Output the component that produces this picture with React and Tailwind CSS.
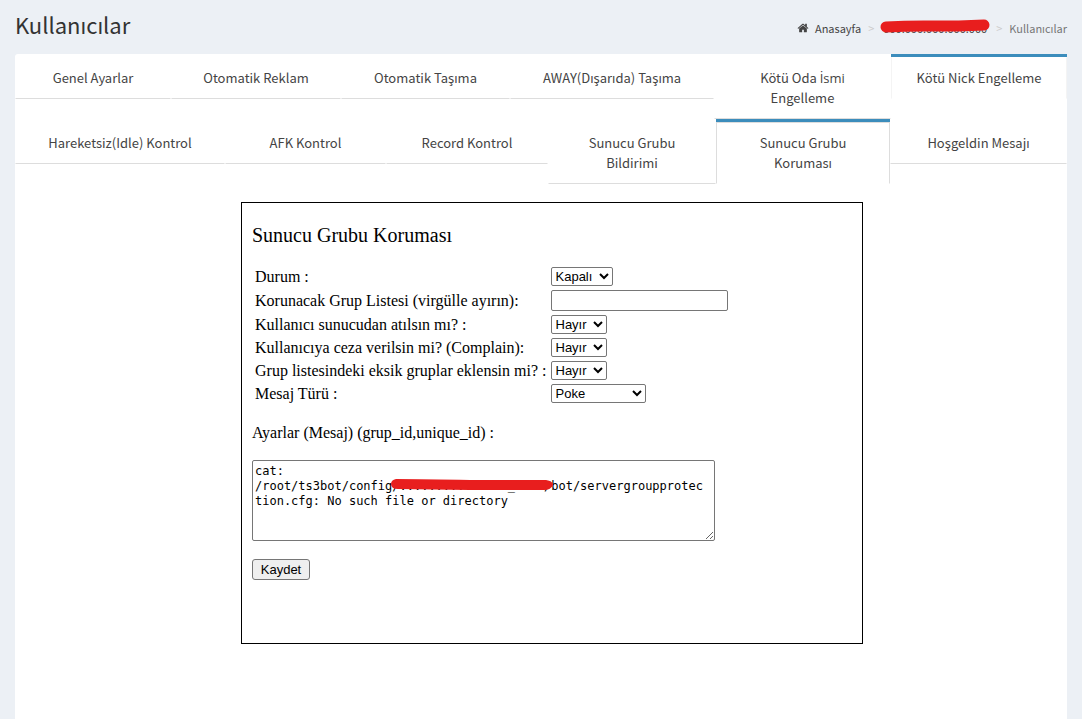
import React, { useState } from "react";

const topTabs = [
  { label: "Genel Ayarlar" },
  { label: "Otomatik Reklam" },
  { label: "Otomatik Taşıma" },
  { label: "AWAY(Dışarıda) Taşıma" },
  { label: "Kötü Oda İsmi Engelleme" },
  { label: "Kötü Nick Engelleme", state: "hover" },
];

const bottomTabs = [
  { label: "Hareketsiz(Idle) Kontrol" },
  { label: "AFK Kontrol" },
  { label: "Record Kontrol" },
  { label: "Sunucu Grubu Bildirimi" },
  { label: "Sunucu Grubu Koruması", state: "active" },
  { label: "Hoşgeldin Mesajı" },
];

const tabStyles = {
  normal: "border-t-transparent",
  hover: "border-t-[#3c8dbc]",
  active: "border-t-[#3c8dbc]",
};

const linkStyles = {
  normal: "border-transparent border-b-[#ddd]",
  hover: "border-transparent border-x-[#f4f4f4]",
  active: "border-[#ddd] border-b-transparent",
};

// The CJK face has no dotted capital I, so words with it use Open Sans
const renderLabel = (label) =>
  label.split(/(İ\S*)/).map((part, i) =>
    part.startsWith("İ") ? (
      <span key={i} className="font-['Open_Sans',sans-serif] leading-none">
        {part}
      </span>
    ) : (
      part
    )
  );

const Tab = ({ label, state = "normal" }) => (
  <li className={`border-t-3 ${tabStyles[state]}`}>
    <a
      href="#"
      className={`block border px-4 py-2.5 text-center text-[13px] leading-5 text-[#444] ${linkStyles[state]}`}
    >
      {renderLabel(label)}
    </a>
  </li>
);

const HomeIcon = () => (
  <svg viewBox="0 0 1792 1792" className="h-3 w-3" fill="currentColor" aria-hidden="true">
    <path d="M1472 992v480q0 26-19 45t-45 19h-384v-384h-256v384h-384q-26 0-45-19t-19-45v-480q0-1 .5-3t.5-3l575-474 575 474q1 2 1 6zm223-69l-62 74q-8 9-21 11h-3q-13 0-21-7l-692-577-692 577q-12 8-24 7-13-2-21-11l-62-74q-8-10-7-23.5t11-21.5l719-599q32-26 76-26t76 26l244 204v-195q0-14 9-23t23-9h192q14 0 23 9t9 23v408l219 182q10 8 11 21.5t-7 23.5z" />
  </svg>
);

const selectClass =
  "block h-[19px] rounded-[2px] border border-[#767676] bg-white font-['Liberation_Sans',Arial,sans-serif] text-[13px] text-black";

const YesNoSelect = ({ id }) => (
  <select id={id} defaultValue="0" className={`${selectClass} w-14`}>
    <option value="0">Hayır</option>
    <option value="1">Evet</option>
  </select>
);

const Row = ({ id, label, children }) => (
  <tr>
    <td className="p-px leading-[18px] whitespace-nowrap">
      <label htmlFor={id}>{label}</label>
    </td>
    <td className="p-px">{children}</td>
  </tr>
);

const App = () => {
  const [groups, setGroups] = useState("");
  const [message, setMessage] = useState(
    "cat: /root/ts3bot/config/..............._..../bot/servergroupprotection.cfg: No such file or directory"
  );

  return (
    <div className="flex min-h-screen flex-col bg-[#ecf0f5] px-[15px] font-['Noto_Sans_CJK_SC','Noto_Sans',sans-serif] text-[#333]">
      {/* Header */}
      <header className="flex h-[54px] items-start justify-between">
        <h1 className="text-[22px] leading-[48px]">Kullanıcılar</h1>
        <nav className="flex items-center pt-5 text-[11px] leading-4 text-[#444]">
          <a href="#" className="flex items-center gap-1.5">
            <HomeIcon />
            Anasayfa
          </a>
          <span className="px-[7px] text-[#ccc]">&gt;</span>
          <a href="#" className="relative block w-[108px] text-center">
            000.000.000.000:000
            <svg viewBox="0 0 112 14" className="absolute -top-px -left-0.5 h-3.5 w-28" aria-hidden="true">
              <path d="M7 8 Q25 7 45 7 T80 7 L105 6" stroke="#e81e1e" strokeWidth="11" strokeLinecap="round" fill="none" />
            </svg>
          </a>
          <span className="px-[7px] text-[#ccc]">&gt;</span>
          <span className="text-[#777]">Kullanıcılar</span>
        </nav>
      </header>

      <main className="flex-1 rounded-t-[3px] bg-white">
        {/* Tabs */}
        <ul className="grid grid-cols-[156fr_170fr_169fr_204fr_177fr_176fr] items-start">
          {topTabs.map((tab) => (
            <Tab key={tab.label} {...tab} />
          ))}
        </ul>
        <ul className="grid grid-cols-[210fr_161fr_162fr_168fr_174fr_177fr] items-start">
          {bottomTabs.map((tab) => (
            <Tab key={tab.label} {...tab} />
          ))}
        </ul>

        {/* Settings form */}
        <div className="flex justify-center pt-[18px] pr-2.5 pb-8 pl-8">
          <form
            onSubmit={(e) => e.preventDefault()}
            className="w-full max-w-[622px] border border-black px-2.5 pt-[21px] pb-[63px] font-['Liberation_Serif',serif] text-base text-black"
          >
            <h2 className="mb-[18px] text-xl leading-[22px]">Sunucu Grubu Koruması</h2>

            <table className="border-separate border-spacing-[2px]">
              <tbody>
                <Row id="status" label="Durum :">
                  <select id="status" defaultValue="0" className={`${selectClass} w-[62px]`}>
                    <option value="0">Kapalı</option>
                    <option value="1">Açık</option>
                  </select>
                </Row>
                <Row id="groups" label="Korunacak Grup Listesi (virgülle ayırın):">
                  <input
                    id="groups"
                    type="text"
                    value={groups}
                    onChange={(e) => setGroups(e.target.value)}
                    className="block h-[21px] w-[177px] rounded-[2px] border border-[#767676] px-0.5 font-['Liberation_Sans',Arial,sans-serif] text-[13px]"
                  />
                </Row>
                <Row id="kick" label="Kullanıcı sunucudan atılsın mı? :">
                  <YesNoSelect id="kick" />
                </Row>
                <Row id="complain" label="Kullanıcıya ceza verilsin mi? (Complain):">
                  <YesNoSelect id="complain" />
                </Row>
                <Row id="missing" label="Grup listesindeki eksik gruplar eklensin mi? :">
                  <YesNoSelect id="missing" />
                </Row>
                <Row id="type" label="Mesaj Türü :">
                  <select id="type" defaultValue="poke" className={`${selectClass} w-[95px]`}>
                    <option value="poke">Poke</option>
                    <option value="message">Özel Mesaj</option>
                  </select>
                </Row>
              </tbody>
            </table>

            <label htmlFor="message" className="mt-[18px] block leading-[18px]">
              Ayarlar (Mesaj) (grup_id,unique_id) :
            </label>

            <div className="relative mt-[18px] w-[463px]">
              <textarea
                id="message"
                value={message}
                onChange={(e) => setMessage(e.target.value)}
                className="block h-[81px] w-full rounded-[2px] border border-[#767676] py-[3px] pr-2 pl-0.5 font-['DejaVu_Sans_Mono',monospace] text-[12px] leading-[15px]"
              />
              <svg viewBox="0 0 164 14" className="pointer-events-none absolute top-[19px] left-[138px] h-3.5 w-[164px]" aria-hidden="true">
                <path d="M6 0 Q35 0 80 1 L156 1 Q163 2 163 6 Q161 11 154 11 L80 11 L8 10 Q1 10 1 5 Q1 1 6 0Z" fill="#e81e1e" />
              </svg>
            </div>

            <button
              type="submit"
              className="mt-[18px] block h-[21px] w-[58px] rounded-[3px] border border-[#767676] bg-[#efefef] font-['Liberation_Sans',Arial,sans-serif] text-[13px] leading-[19px]"
            >
              Kaydet
            </button>
          </form>
        </div>
      </main>
    </div>
  );
};

export default App;
